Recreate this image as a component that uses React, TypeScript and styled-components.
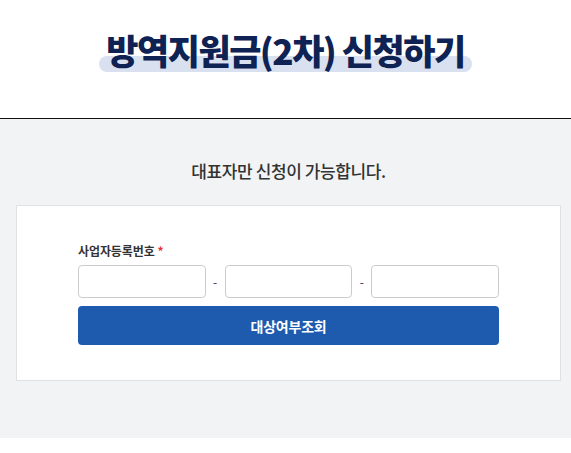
import styled, { createGlobalStyle } from "styled-components";

const GlobalStyle = createGlobalStyle`
  body {
    margin: 0;
    background: #ffffff;
    font-family: "Noto Sans CJK KR", "Noto Sans", sans-serif;
    color: #333333;
  }
  * {
    box-sizing: border-box;
  }
`;

const Header = styled.header`
  height: 119px;
  display: flex;
  justify-content: center;
  padding-top: 26px;
  border-bottom: 1px solid #111111;
`;

const Title = styled.h1`
  position: relative;
  margin: 0;
  height: 48px;
  padding: 0 7px;
  font-size: 35px;
  line-height: 48px;
  font-weight: 900;
  letter-spacing: -1.5px;
  color: #0e2253;

  &::before {
    content: "";
    position: absolute;
    left: 0;
    right: 0;
    top: 30px;
    height: 16px;
    border-radius: 8px;
    background: #d9e1f0;
    z-index: -1;
  }
`;

const TitleText = styled.span`
  position: relative;
`;

const Section = styled.section`
  background: #f2f3f5;
  padding: 39px 10px 57px 16px;
`;

const Notice = styled.p`
  margin: 0 0 22px;
  text-align: center;
  font-size: 17px;
  line-height: 25px;
  font-weight: 500;
  letter-spacing: -0.4px;
  color: #333333;
`;

const Card = styled.div`
  background: #ffffff;
  border: 1px solid #e0e1e3;
  padding: 36px 61px 35px 61px;
`;

const Label = styled.label`
  display: block;
  font-size: 12px;
  line-height: 18px;
  font-weight: 700;
  letter-spacing: -0.1px;
  color: #333333;
  margin-bottom: 5px;
`;

const Required = styled.span`
  color: #e8333a;
  margin-left: 3px;
`;

const InputRow = styled.div`
  display: grid;
  grid-template-columns: 1fr 19px 1fr 19px 1fr;
  align-items: center;
  margin-bottom: 8px;
`;

const NumberInput = styled.input`
  width: 100%;
  height: 33px;
  border: 1px solid #cccccc;
  border-radius: 4px;
  background: #ffffff;
  padding: 0 8px;
  font-size: 13px;
  outline: none;
`;

const Dash = styled.span`
  text-align: center;
  font-size: 12px;
  color: #333333;
`;

const SubmitButton = styled.button`
  display: block;
  width: 100%;
  height: 39px;
  border: none;
  border-radius: 4px;
  background: #1e5bae;
  color: #ffffff;
  font-family: inherit;
  font-size: 14px;
  font-weight: 700;
  letter-spacing: -0.2px;
  cursor: pointer;
`;

export default function App() {
  return (
    <>
      <GlobalStyle />
      <Header>
        <Title>
          <TitleText>방역지원금(2차) 신청하기</TitleText>
        </Title>
      </Header>
      <Section>
        <Notice>대표자만 신청이 가능합니다.</Notice>
        <Card>
          <Label>
            사업자등록번호<Required>*</Required>
          </Label>
          <InputRow>
            <NumberInput maxLength={3} />
            <Dash>-</Dash>
            <NumberInput maxLength={2} />
            <Dash>-</Dash>
            <NumberInput maxLength={5} />
          </InputRow>
          <SubmitButton type="button">대상여부조회</SubmitButton>
        </Card>
      </Section>
    </>
  );
}
